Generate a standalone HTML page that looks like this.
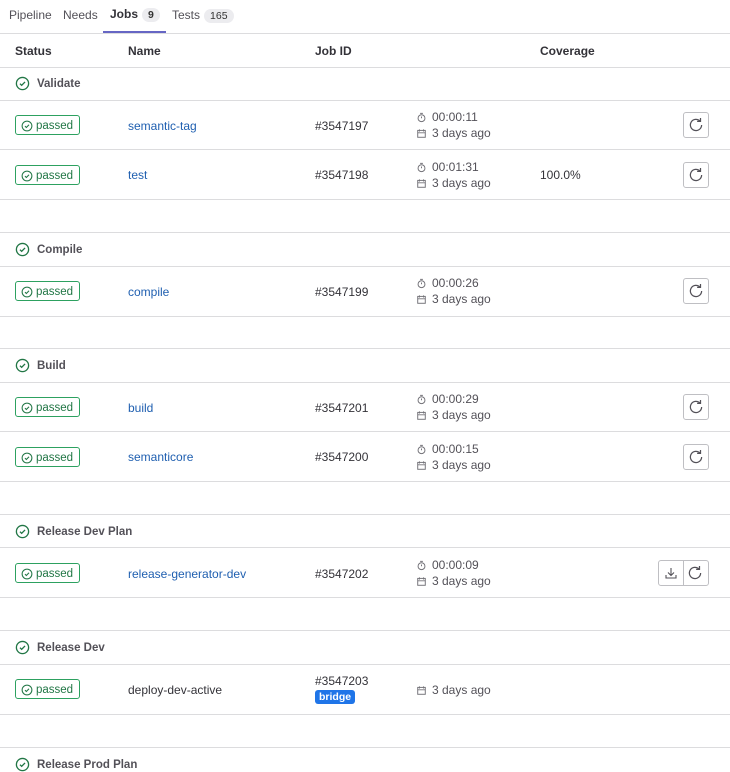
<!DOCTYPE html>
<html><head><meta charset="utf-8"><style>
*{box-sizing:border-box;margin:0;padding:0}
body{width:730px;height:771px;overflow:hidden;background:#fff;font-family:"Liberation Sans",sans-serif;font-size:12px;color:#333238;position:relative}
.a{position:absolute}
.hl{position:absolute;left:0;width:730px;height:1px;background:#dcdcde}
.tab{position:absolute;top:8px;font-size:12px;color:#535158}
.cnt{display:inline-block;background:#ececef;border-radius:8px;padding:1px 6px;font-size:10.5px;margin-left:4px;color:#333}
.th{position:absolute;top:44px;font-weight:bold;font-size:12px;color:#333238}
.stage{position:absolute;left:15px;font-weight:bold;font-size:11.5px;color:#535158;display:flex;align-items:center;gap:7px}
.badge{position:absolute;left:15px;width:65px;height:20px;border:1px solid #2da160;border-radius:3px;color:#217645;font-size:11.5px;display:flex;align-items:center;padding-left:5px;padding-top:2px;gap:3px;line-height:12px}
.name{position:absolute;left:128px;color:#1f5fb0;font-size:12px}
.jid{position:absolute;left:315px;font-size:12px}
.t{position:absolute;left:416px;font-size:12px;color:#535158;line-height:16px}
.t div{display:flex;align-items:center;gap:5px}
.btn{position:absolute;left:683px;width:26px;height:26px;border:1px solid #bfbfc3;border-radius:3px;display:flex;align-items:center;justify-content:center}
</style></head><body>
<svg width="0" height="0" style="position:absolute"><defs>
<symbol id="ck" viewBox="0 0 16 16"><circle cx="8" cy="8" r="6.5" fill="none" stroke="#217645" stroke-width="1.4"/><path d="M5.3 8.2l1.8 1.8 3.6-3.7" fill="none" stroke="#217645" stroke-width="1.4"/></symbol>
<symbol id="rt" viewBox="0 0 16 16"><path d="M13 8a5 5 0 1 1-1.5-3.6" fill="none" stroke="#535158" stroke-width="1.1"/><path d="M12 1.8v3H9" fill="none" stroke="#535158" stroke-width="1.1"/></symbol>
<symbol id="tm" viewBox="0 0 16 16"><circle cx="8" cy="9" r="5" fill="none" stroke="#737278" stroke-width="1.4"/><path d="M6 2h4M8 9V6.5" stroke="#737278" stroke-width="1.4"/></symbol>
<symbol id="cal" viewBox="0 0 16 16"><rect x="2.5" y="3.5" width="11" height="10" fill="none" stroke="#737278" stroke-width="1.4"/><path d="M2.5 7h11M5 2v3M11 2v3" stroke="#737278" stroke-width="1.4"/></symbol>
</defs></svg>

<div class="tab" style="left:9px">Pipeline</div>
<div class="tab" style="left:63px">Needs</div>
<div class="tab" style="left:110px;color:#333238;font-weight:bold;top:7px">Jobs<span class="cnt">9</span></div>
<div class="tab" style="left:172px">Tests<span class="cnt" style="font-weight:normal">165</span></div>
<div class="a" style="left:103px;top:31px;width:63px;height:2px;background:#6666c4"></div>
<div class="hl" style="top:33px"></div>
<div class="th" style="left:15px">Status</div>
<div class="th" style="left:128px">Name</div>
<div class="th" style="left:315px">Job ID</div>
<div class="th" style="left:540px">Coverage</div>
<div class="hl" style="top:67px"></div>

<div class="stage" style="top:76px"><svg width="15" height="15"><use href="#ck"/></svg>Validate</div>
<div class="hl" style="top:100px"></div>
<div class="badge" style="top:115px"><svg width="12" height="12"><use href="#ck"/></svg>passed</div>
<div class="name" style="top:119px">semantic-tag</div>
<div class="jid" style="top:119px">#3547197</div>
<div class="t" style="top:109px"><div><svg width="11" height="11"><use href="#tm"/></svg>00:00:11</div><div><svg width="11" height="11"><use href="#cal"/></svg>3 days ago</div></div>
<div class="btn" style="top:112px"><svg width="18" height="18"><use href="#rt"/></svg></div>
<div class="hl" style="top:149px"></div>
<div class="badge" style="top:165px"><svg width="12" height="12"><use href="#ck"/></svg>passed</div>
<div class="name" style="top:168px">test</div>
<div class="jid" style="top:168px">#3547198</div>
<div class="t" style="top:159px"><div><svg width="11" height="11"><use href="#tm"/></svg>00:01:31</div><div><svg width="11" height="11"><use href="#cal"/></svg>3 days ago</div></div>
<div class="a" style="left:540px;top:168px">100.0%</div>
<div class="btn" style="top:162px"><svg width="18" height="18"><use href="#rt"/></svg></div>
<div class="hl" style="top:199px"></div>
<div class="hl" style="top:232px"></div>

<div class="stage" style="top:242px"><svg width="15" height="15"><use href="#ck"/></svg>Compile</div>
<div class="hl" style="top:266px"></div>
<div class="badge" style="top:281px"><svg width="12" height="12"><use href="#ck"/></svg>passed</div>
<div class="name" style="top:285px">compile</div>
<div class="jid" style="top:285px">#3547199</div>
<div class="t" style="top:275px"><div><svg width="11" height="11"><use href="#tm"/></svg>00:00:26</div><div><svg width="11" height="11"><use href="#cal"/></svg>3 days ago</div></div>
<div class="btn" style="top:278px"><svg width="18" height="18"><use href="#rt"/></svg></div>
<div class="hl" style="top:316px"></div>
<div class="hl" style="top:348px"></div>

<div class="stage" style="top:358px"><svg width="15" height="15"><use href="#ck"/></svg>Build</div>
<div class="hl" style="top:382px"></div>
<div class="badge" style="top:397px"><svg width="12" height="12"><use href="#ck"/></svg>passed</div>
<div class="name" style="top:401px">build</div>
<div class="jid" style="top:401px">#3547201</div>
<div class="t" style="top:391px"><div><svg width="11" height="11"><use href="#tm"/></svg>00:00:29</div><div><svg width="11" height="11"><use href="#cal"/></svg>3 days ago</div></div>
<div class="btn" style="top:394px"><svg width="18" height="18"><use href="#rt"/></svg></div>
<div class="hl" style="top:431px"></div>
<div class="badge" style="top:447px"><svg width="12" height="12"><use href="#ck"/></svg>passed</div>
<div class="name" style="top:450px">semanticore</div>
<div class="jid" style="top:450px">#3547200</div>
<div class="t" style="top:441px"><div><svg width="11" height="11"><use href="#tm"/></svg>00:00:15</div><div><svg width="11" height="11"><use href="#cal"/></svg>3 days ago</div></div>
<div class="btn" style="top:444px"><svg width="18" height="18"><use href="#rt"/></svg></div>
<div class="hl" style="top:481px"></div>
<div class="hl" style="top:514px"></div>

<div class="stage" style="top:524px"><svg width="15" height="15"><use href="#ck"/></svg>Release Dev Plan</div>
<div class="hl" style="top:547px"></div>
<div class="badge" style="top:563px"><svg width="12" height="12"><use href="#ck"/></svg>passed</div>
<div class="name" style="top:567px">release-generator-dev</div>
<div class="jid" style="top:567px">#3547202</div>
<div class="t" style="top:557px"><div><svg width="11" height="11"><use href="#tm"/></svg>00:00:09</div><div><svg width="11" height="11"><use href="#cal"/></svg>3 days ago</div></div>
<div class="btn" style="top:560px;left:658px;width:51px;border-radius:3px;justify-content:space-around">
<svg width="16" height="16" viewBox="0 0 16 16"><path d="M8 3v7M5 7.5l3 3 3-3M3 10v3h10v-3" fill="none" stroke="#535158" stroke-width="1.1"/></svg>
<svg width="18" height="18"><use href="#rt"/></svg></div>
<div class="a" style="left:683px;top:561px;width:1px;height:24px;background:#bfbfc3"></div>
<div class="hl" style="top:597px"></div>
<div class="hl" style="top:630px"></div>

<div class="stage" style="top:640px"><svg width="15" height="15"><use href="#ck"/></svg>Release Dev</div>
<div class="hl" style="top:664px"></div>
<div class="badge" style="top:679px"><svg width="12" height="12"><use href="#ck"/></svg>passed</div>
<div class="a" style="left:128px;top:683px">deploy-dev-active</div>
<div class="jid" style="top:674px">#3547203</div>
<div class="a" style="left:315px;top:690px;background:#1f75e8;color:#fff;font-weight:bold;font-size:10.5px;border-radius:3px;padding:1px 4px">bridge</div>
<div class="t" style="top:682px"><div><svg width="11" height="11"><use href="#cal"/></svg>3 days ago</div></div>
<div class="hl" style="top:714px"></div>
<div class="hl" style="top:747px"></div>

<div class="stage" style="top:757px"><svg width="15" height="15"><use href="#ck"/></svg>Release Prod Plan</div>
</body></html>
